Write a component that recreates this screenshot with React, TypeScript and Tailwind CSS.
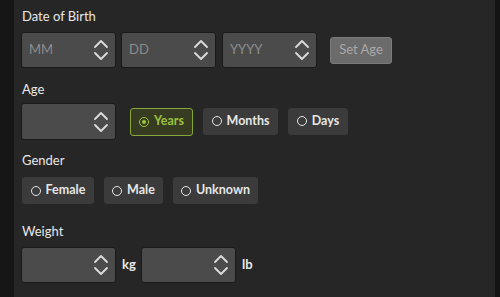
const font = { fontFamily: 'Lato, "Open Sans", sans-serif' }

function Chevrons() {
  return (
    <svg width="16" height="24" viewBox="0 0 16 24" className="shrink-0" fill="none" stroke="#dcdcdc" strokeWidth="1.8" strokeLinecap="round" strokeLinejoin="round">
      <path d="M2 9 L8 3 L14 9" />
      <path d="M2 15 L8 21 L14 15" />
    </svg>
  )
}

function Spinner({ placeholder = '', tall = false }: { placeholder?: string; tall?: boolean }) {
  return (
    <div
      className={
        'w-[95px] flex items-center justify-between pl-[7px] pr-[6px] bg-[#4b4b4b] border border-[#1a1a1a] rounded-[3px] ' +
        (tall ? 'h-[37px]' : 'h-[36px]')
      }
    >
      <span className="text-[13px] text-[#8c8c8c]">{placeholder}</span>
      <Chevrons />
    </div>
  )
}

function Radio({ label, w, active = false }: { label: string; w: string; active?: boolean }) {
  return (
    <div
      className={
        'flex items-center justify-center gap-[5px] rounded-[3px] text-[12.5px] font-bold ' +
        w +
        (active
          ? ' h-[28px] bg-[#363b22] border border-[#86a83a] text-[#9cc23c]'
          : ' h-[27px] bg-[#3b3b3b] text-[#e6e6e6]')
      }
    >
      <span
        className={
          'w-[10px] h-[10px] rounded-full border-[1.6px] flex items-center justify-center ' +
          (active ? 'border-[#9cc23c]' : 'border-[#e6e6e6]')
        }
      >
        {active && <span className="w-[4px] h-[4px] rounded-full bg-[#9cc23c]" />}
      </span>
      {label}
    </div>
  )
}

export default function App() {
  return (
    <div className="w-[500px] h-[297px] flex bg-[#151515] overflow-hidden" style={font}>
      <div className="w-[14px] bg-[#161616]" />
      <div className="flex-1 bg-[#262626] pl-[7px] flex flex-col">
        <p className="mt-[8px] h-4 leading-4 text-[13px] text-[#e8e8e8] pl-[1px]">Date of Birth</p>
        <div className="mt-[8px] flex items-center">
          <Spinner placeholder="MM" />
          <div className="ml-[5px]">
            <Spinner placeholder="DD" />
          </div>
          <div className="ml-[6px]">
            <Spinner placeholder="YYYY" />
          </div>
          <div className="ml-[13px] w-[62px] h-[27px] flex items-center justify-center rounded-[3px] bg-[#6b6b6b] border border-[#7a7a7a] text-[13px] text-[#a9a9a9]">
            Set Age
          </div>
        </div>

        <p className="mt-[13px] h-4 leading-4 text-[13px] text-[#e8e8e8] pl-[1px]">Age</p>
        <div className="mt-[6px] flex items-center">
          <Spinner tall />
          <div className="ml-[14px] flex gap-[10px]">
            <Radio label="Years" w="w-[63px]" active />
            <Radio label="Months" w="w-[75px]" />
            <Radio label="Days" w="w-[60px]" />
          </div>
        </div>

        <p className="mt-[12px] h-4 leading-4 text-[13px] text-[#e8e8e8] pl-[1px]">Gender</p>
        <div className="mt-[9px] flex gap-[10px] pl-[1px]">
          <Radio label="Female" w="w-[72px]" />
          <Radio label="Male" w="w-[59px]" />
          <Radio label="Unknown" w="w-[85px]" />
        </div>

        <p className="mt-[19px] h-4 leading-4 text-[13px] text-[#e8e8e8] pl-[1px]">Weight</p>
        <div className="mt-[8px] flex items-center">
          <Spinner />
          <span className="ml-[6px] w-[19px] text-[13px] font-bold text-[#e8e8e8]">kg</span>
          <Spinner />
          <span className="ml-[6px] text-[13px] font-bold text-[#e8e8e8]">lb</span>
        </div>
      </div>
      <div className="w-[5px] bg-[#141414]" />
    </div>
  )
}
